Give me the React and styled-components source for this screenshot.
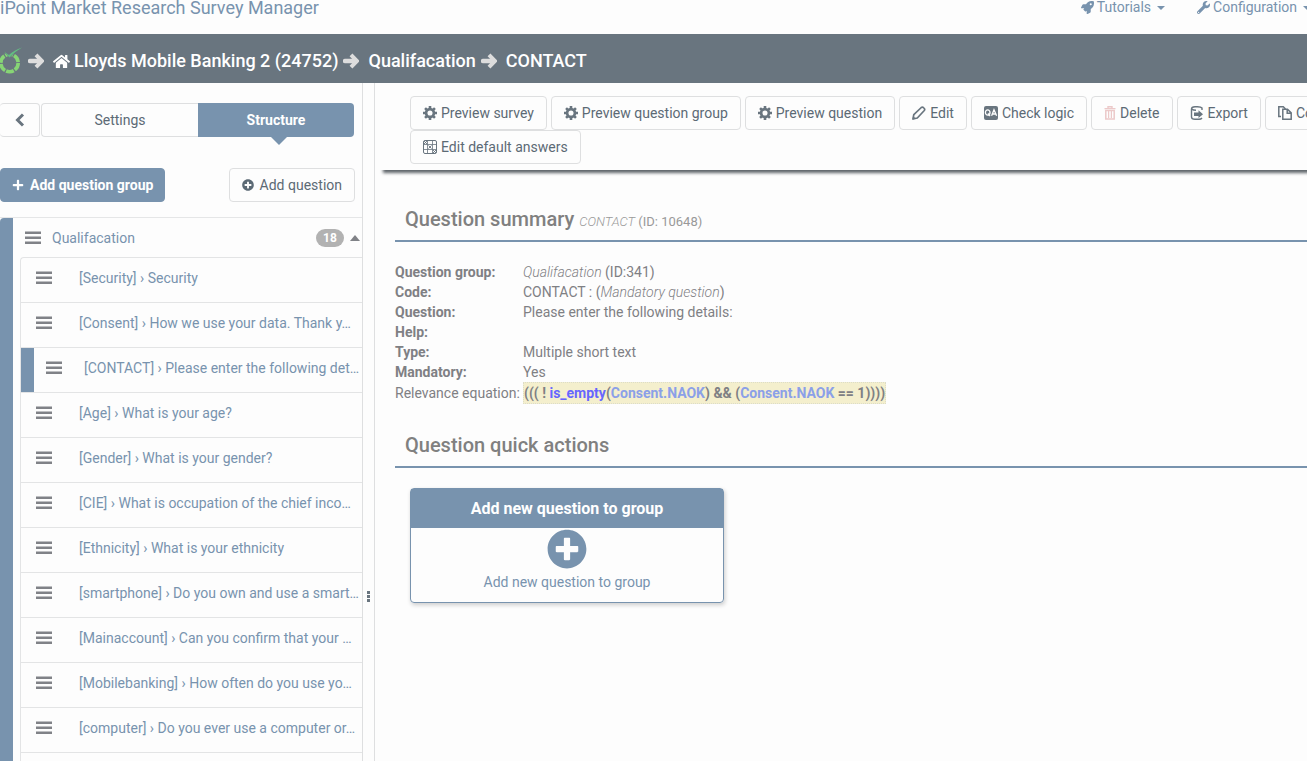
import styled, { createGlobalStyle, css } from "styled-components";
import {
  FaHome,
  FaPlus,
  FaPlusCircle,
  FaRocket,
  FaWrench,
} from "react-icons/fa";

const blue = "#7893ae";
const slate = "#69757f";
const line = "#dedfe0";

const GlobalStyle = createGlobalStyle`
  * {
    box-sizing: border-box;
  }

  html,
  body {
    margin: 0;
    height: 100%;
    overflow: hidden;
  }

  #root {
    height: 100%;
  }

  body {
    background: #fdfdfd;
    color: #7f8084;
    font-family: Roboto, "Liberation Sans", sans-serif;
    font-size: 14px;
    line-height: 20px;
  }

  a {
    color: ${blue};
    text-decoration: none;
  }

  button {
    font: inherit;
    cursor: pointer;
  }
`;

const Page = styled.div`
  display: flex;
  flex-direction: column;
  height: 100%;
`;

const Navbar = styled.header`
  display: flex;
  align-items: flex-start;
  justify-content: space-between;
  flex: none;
  height: 34px;
  overflow: hidden;
`;

const Brand = styled.a`
  font-size: 18px;
  line-height: 16px;
`;

const NavLinks = styled.nav`
  display: flex;
  gap: 32px;
  margin-right: -4px;
  line-height: 15px;
`;

const NavLink = styled.a`
  display: flex;
  align-items: center;
  gap: 3px;
`;

const Caret = styled.span`
  border: 4px solid transparent;
  border-top-color: currentColor;
  border-bottom-width: 0;
  margin-left: 3px;
  ${(p) =>
    p.$up &&
    css`
      border: 5px solid transparent;
      border-top-width: 0;
      border-bottom: 6px solid #808287;
      margin-left: 6px;
    `}
`;

const Breadcrumb = styled.nav`
  display: flex;
  align-items: center;
  flex: none;
  gap: 5px;
  height: 49px;
  padding-top: 5px;
  background: ${slate};
  color: #dddddd;
  font-size: 18px;
  font-weight: 500;
`;

const Crumb = styled.a`
  display: flex;
  align-items: center;
  gap: 4px;
  margin-left: 4px;
  color: white;
`;

const Body = styled.div`
  display: flex;
  flex: 1;
  min-height: 0;
`;

const Sidebar = styled.aside`
  flex: none;
  width: 363px;
  border-right: 1px solid ${line};
  overflow: hidden;
`;

const Resizer = styled.div`
  display: flex;
  align-items: flex-start;
  justify-content: center;
  flex: none;
  width: 12px;
  padding-top: 508px;
  border-right: 1px solid ${line};
`;

const Dots = styled.span`
  display: grid;
  gap: 1px;

  i {
    width: 3px;
    height: 3px;
    background: ${slate};
  }
`;

const Tabs = styled.div`
  display: flex;
  gap: 1px;
  padding: 20px 8px 0 0;
`;

const tabBase = css`
  height: 34px;
  border: 1px solid ${line};
  background: #fdfdfd;
  color: #5c6a75;
  padding: 0;
`;

const Collapse = styled.button`
  ${tabBase}
  display: flex;
  align-items: center;
  justify-content: center;
  width: 40px;
  border-left: 0;
  border-radius: 4px;
`;

const TabGroup = styled.div`
  display: flex;
  flex: 1;
`;

const Tab = styled.button`
  ${tabBase}
  position: relative;
  flex: 1;
  border-right: 0;
  border-radius: 4px 0 0 4px;
  ${(p) =>
    p.$active &&
    css`
      border: 0;
      border-radius: 0 4px 4px 0;
      background: ${blue};
      color: white;
      font-weight: 700;

      &::after {
        content: "";
        position: absolute;
        top: 100%;
        left: calc(50% + 3px);
        margin-left: -8px;
        border: 8px solid transparent;
        border-top-color: ${blue};
        border-bottom: 0;
      }
    `}
`;

const AddBar = styled.div`
  display: flex;
  justify-content: space-between;
  padding: 31px 7px 15px 0;
`;

const Button = styled.button`
  display: flex;
  align-items: center;
  flex: none;
  gap: ${(p) => (p.$gap ? p.$gap : 4)}px;
  height: 34px;
  padding: 0 12px;
  border: 1px solid ${line};
  border-radius: 4px;
  background: #fdfdfd;
  color: #5c6a75;
  ${(p) =>
    p.$primary &&
    css`
      padding: 0 11px;
      border-color: ${blue};
      background: ${blue};
      color: white;
      font-weight: 700;
    `}
`;

const Group = styled.section`
  border-top: 1px solid #e5e6e7;
`;

const GroupInner = styled.div`
  border-left: 13px solid ${blue};
  border-radius: 4px 0 0 0;
  padding-left: 7px;
`;

const GroupHeader = styled.div`
  display: flex;
  align-items: center;
  height: 39px;
  padding: 0 2px 0 5px;

  a {
    flex: 1;
    margin-left: 11px;
  }
`;

const Badge = styled.span`
  width: 28px;
  border-radius: 9px;
  background: #b2b2b2;
  color: white;
  font-size: 12px;
  font-weight: 700;
  line-height: 18px;
  text-align: center;
`;

const QuestionList = styled.ul`
  margin: 0;
  padding: 0 0 45px;
  list-style: none;
  border: 1px solid #e3e4e5;
  border-width: 1px 0 0 1px;
  border-radius: 4px 0 0 0;
`;

const QuestionItem = styled.li`
  height: 45px;
  border-bottom: 1px solid #e3e4e5;
`;

const QuestionRow = styled.div`
  display: flex;
  align-items: center;
  gap: ${(p) => (p.$current ? 22 : 27)}px;
  height: 44px;
  padding: 0 2px 4px ${(p) => (p.$current ? 12 : 15)}px;
  ${(p) =>
    p.$current &&
    css`
      border-left: 13px solid ${blue};
    `}

  a {
    flex: 1;
    white-space: nowrap;
  }
`;

const Main = styled.main`
  flex: 1;
  min-width: 0;
  overflow: hidden;
`;

const Toolbar = styled.div`
  margin-left: 3px;
  padding: 13px 0 6px 32px;
  box-shadow: 4px 4px 3px -1px #5f656a;
`;

const ButtonRow = styled.div`
  display: flex;
  gap: 4px;
`;

const Content = styled.div`
  padding: 34px 0 0 20px;
`;

const Heading = styled.h3`
  margin: 0;
  padding: 0 10px 6px;
  border-bottom: 2px solid ${blue};
  color: #808080;
  font-size: 20px;
  font-weight: 500;
  line-height: 30px;

  small {
    color: #999;
    font-size: 13px;
    font-weight: 400;
    line-height: 1;
  }

  i {
    font-weight: 300;
  }
`;

const Summary = styled.table`
  margin: 20px 0 26px;
  border-collapse: collapse;

  th,
  td {
    padding: 0;
    height: 20px;
    text-align: left;
    white-space: nowrap;
  }

  th {
    width: 128px;
  }

  i {
    font-weight: 300;
  }
`;

const LightHead = styled.th`
  font-weight: 400;
`;

const Expression = styled.span`
  display: block;
  border: 1px dotted #dcdcc8;
  background: #f4efcd;
  font-weight: 700;
`;

const Fn = styled.span`
  color: #6666ff;
`;

const Var = styled.span`
  color: #8ba0e8;
`;

const Card = styled.a`
  display: block;
  width: 314px;
  margin: 20px 0 0 15px;
  border: 1px solid ${blue};
  border-radius: 4px;
  box-shadow: 1px 2px 4px #ccc;
  text-align: center;

  h4 {
    margin: 0;
    background: ${blue};
    color: white;
    font-size: 16px;
    font-weight: 700;
    line-height: 39px;
  }

  svg {
    display: block;
    margin: 1px auto 0;
  }

  p {
    margin: 3px 0 10px;
  }
`;

const ArrowIcon = () => (
  <svg width="16" height="16" viewBox="0 0 16 16" fill="none" stroke="currentColor">
    <path d="M2 8H12" strokeWidth="4.400" strokeLinecap="round" />
    <path d="M8 1.800L14 8l-6 6.200" strokeWidth="4" />
  </svg>
);

const BarsIcon = () => (
  <svg width="16" height="14" viewBox="0 0 16 14" fill="#808287">
    <path d="M0 0.500h16v2.500h-16zM0 5.500h16v2.500h-16zM0 10.500h16v2.500h-16z" />
  </svg>
);

const ChevronIcon = () => (
  <svg width="10" height="14" viewBox="0 0 10 14" fill="none" stroke={slate} strokeWidth="3">
    <path d="M8 1.500L2.500 7L8 12.500" />
  </svg>
);

const CogIcon = () => (
  <svg width="14" height="14" viewBox="0 0 14 14" fill="none" stroke={slate}>
    <circle cx="7" cy="7" r="3.900" strokeWidth="2.700" />
    <path
      d="M7 0v2.500M7 11.500V14M0 7h2.500M11.500 7H14M2.050 2.050l1.800 1.800M10.150 10.150l1.800 1.800M2.050 11.950l1.800-1.800M10.150 3.850l1.800-1.800"
      strokeWidth="2.600"
    />
  </svg>
);

const PencilIcon = () => (
  <svg width="14" height="14" viewBox="0 0 14 14" fill="none" stroke={slate} strokeWidth="1.700">
    <path d="M1 13l.8-4.300L9.300 1.500q1-.8 2 0l1 1q.8 1 0 2L5.300 12z" strokeLinejoin="round" />
    <path d="M.5 13.500l.6-3.500L4 12.800z" fill={slate} stroke="none" />
  </svg>
);

const LogicIcon = () => (
  <svg width="14" height="14" viewBox="0 0 14 14">
    <rect width="14" height="14" rx="2" fill={slate} />
    <g fill="none" stroke="#fdfdfd" strokeWidth="1.300">
      <ellipse cx="3.700" cy="6.500" rx="2.300" ry="2.700" />
      <path d="M4 7.500l2 2.500M7.600 9.800L10 3.800l2.600 6M8.500 8h3.200" />
    </g>
  </svg>
);

const TrashIcon = () => (
  <svg width="12" height="14" viewBox="0 0 12 14" fill="none" stroke="#ecc9c9">
    <path d="M.5 2.600h11M4 2V.8h4V2" strokeWidth="1.400" />
    <path d="M1.800 4.500h8.400V13H1.800z" strokeWidth="1.500" />
    <path d="M4.600 5v7M7.400 5v7" strokeWidth="1.200" />
  </svg>
);

const ExportIcon = () => (
  <svg width="14" height="14" viewBox="0 0 14 14" fill="none" stroke={slate} strokeWidth="1.400">
    <path d="M12 4V2Q11 .7 7.500.7H5Q1.500.7 1.500 3v8q0 2.300 3.500 2.300h4q2 0 3-1.300M2 3.200Q3 4.200 6 4.200" />
    <path d="M4 6.500h4.500V4.300l4.500 3.900-4.500 3.900V9.900H4z" fill={slate} stroke="none" />
  </svg>
);

const CopyIcon = () => (
  <svg width="14" height="14" viewBox="0 0 14 14" fill="none" stroke={slate} strokeWidth="1.500">
    <path d="M3 10.500H.8V.8h4.500L7.500 3" />
    <path d="M4.800 3.200h4.700l3.700 3.700v6.300H4.800zM9.200 3.500v3.700H13" />
  </svg>
);

const GridIcon = () => (
  <svg width="14" height="14" viewBox="0 0 14 14" fill="none" stroke={slate}>
    <rect x=".5" y=".5" width="13" height="13" rx="1.500" />
    <path d="M4.500 1v12M9.500 1v12M1 4.500h12M1 9.500h12" strokeWidth=".8" />
    <path d="M1 1l3 3M5.500 5.500l3 3M8.500 5.500l-3 3M10 10l3 3M13 10l-3 3M1 4l3-3" strokeWidth=".9" />
  </svg>
);

const LimeLogo = () => (
  <svg width="23" height="28" viewBox="0 0 23 28" fill="none">
    <circle cx="9.500" cy="16" r="8.700" stroke="#87d575" strokeWidth="3.600" strokeDasharray="7.900 1.200" />
    <path d="M2 3h15l-7 8z" fill={slate} />
    <path d="M4 4.500l5 3.500Q14 3 22 .5q-7 4-12.500 10z" fill="#62bd82" />
  </svg>
);

const questions = [
  ["Security", "Security"],
  ["Consent", "How we use your data. Thank y…"],
  ["CONTACT", "Please enter the following det…"],
  ["Age", "What is your age?"],
  ["Gender", "What is your gender?"],
  ["CIE", "What is occupation of the chief inco…"],
  ["Ethnicity", "What is your ethnicity"],
  ["smartphone", "Do you own and use a smart…"],
  ["Mainaccount", "Can you confirm that your …"],
  ["Mobilebanking", "How often do you use yo…"],
  ["computer", "Do you ever use a computer or…"],
];

const actions = [
  [CogIcon, "Preview survey"],
  [CogIcon, "Preview question group"],
  [CogIcon, "Preview question"],
  [PencilIcon, "Edit"],
  [LogicIcon, "Check logic"],
  [TrashIcon, "Delete"],
  [ExportIcon, "Export"],
  [CopyIcon, "Copy"],
];

const App = () => {
  return (
    <Page>
      <GlobalStyle />
      <Navbar>
        <Brand href="#">iPoint Market Research Survey Manager</Brand>
        <NavLinks>
          <NavLink href="#">
            <FaRocket size={13} /> Tutorials <Caret />
          </NavLink>
          <NavLink href="#">
            <FaWrench size={13} /> Configuration <Caret />
          </NavLink>
        </NavLinks>
      </Navbar>

      <Breadcrumb>
        <LimeLogo />
        <ArrowIcon />
        <Crumb href="#">
          <FaHome size={17} /> Lloyds Mobile Banking 2 (24752)
        </Crumb>
        <ArrowIcon />
        <Crumb href="#">Qualifacation</Crumb>
        <ArrowIcon />
        <Crumb as="span">CONTACT</Crumb>
      </Breadcrumb>

      <Body>
        <Sidebar>
          <Tabs>
            <Collapse aria-label="Collapse sidebar">
              <ChevronIcon />
            </Collapse>
            <TabGroup>
              <Tab>Settings</Tab>
              <Tab $active>Structure</Tab>
            </TabGroup>
          </Tabs>
          <AddBar>
            <Button $primary $gap={6}>
              <FaPlus size={12} /> Add question group
            </Button>
            <Button $gap={6}>
              <FaPlusCircle size={12} /> Add question
            </Button>
          </AddBar>
          <Group>
            <GroupInner>
              <GroupHeader>
                <BarsIcon />
                <a href="#">Qualifacation</a>
                <Badge>18</Badge>
                <Caret $up />
              </GroupHeader>
              <QuestionList>
                {questions.map(([code, text]) => (
                  <QuestionItem key={code}>
                    <QuestionRow $current={code === "CONTACT"}>
                      <BarsIcon />
                      <a href="#">
                        [{code}] › {text}
                      </a>
                    </QuestionRow>
                  </QuestionItem>
                ))}
              </QuestionList>
            </GroupInner>
          </Group>
        </Sidebar>
        <Resizer>
          <Dots>
            <i />
            <i />
            <i />
          </Dots>
        </Resizer>

        <Main>
          <Toolbar>
            <ButtonRow>
              {actions.map(([Icon, label]) => (
                <Button key={label}>
                  <Icon /> {label}
                </Button>
              ))}
            </ButtonRow>
            <ButtonRow>
              <Button>
                <GridIcon /> Edit default answers
              </Button>
            </ButtonRow>
          </Toolbar>
          <Content>
            <Heading>
              Question summary{" "}
              <small>
                <i>CONTACT</i> (ID: 10648)
              </small>
            </Heading>
            <Summary>
              <tbody>
                <tr>
                  <th>Question group:</th>
                  <td>
                    <i>Qualifacation</i> (ID:341)
                  </td>
                </tr>
                <tr>
                  <th>Code:</th>
                  <td>
                    CONTACT : (<i>Mandatory question</i>)
                  </td>
                </tr>
                <tr>
                  <th>Question:</th>
                  <td>Please enter the following details:</td>
                </tr>
                <tr>
                  <th>Help:</th>
                  <td />
                </tr>
                <tr>
                  <th>Type:</th>
                  <td>Multiple short text</td>
                </tr>
                <tr>
                  <th>Mandatory:</th>
                  <td>Yes</td>
                </tr>
                <tr>
                  <LightHead>Relevance equation:</LightHead>
                  <td>
                    <Expression>
                      ((( ! <Fn>is_empty</Fn>(<Var>Consent.NAOK</Var>) &amp;&amp; (
                      <Var>Consent.NAOK</Var> == 1))))
                    </Expression>
                  </td>
                </tr>
              </tbody>
            </Summary>
            <Heading>Question quick actions</Heading>
            <Card href="#">
              <h4>Add new question to group</h4>
              <FaPlusCircle size={40} />
              <p>Add new question to group</p>
            </Card>
          </Content>
        </Main>
      </Body>
    </Page>
  );
};

export default App;
